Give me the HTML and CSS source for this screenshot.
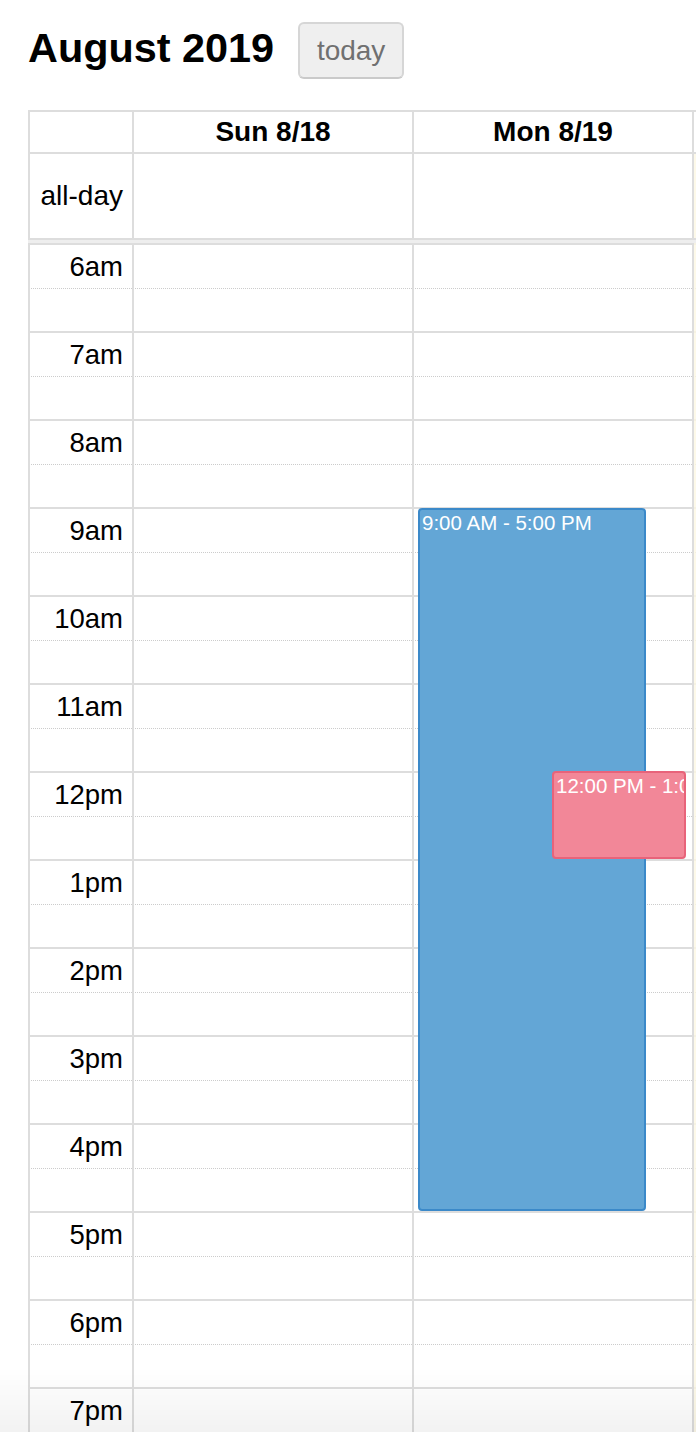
FILE: index.html
```html
<!DOCTYPE html>
<html lang="en">

<head>
  <meta charset="UTF-8">
  <meta name="viewport" content="width=device-width, initial-scale=1.0">
  <title>Calendar</title>
  <link rel="stylesheet" href="styles.css">
</head>

<body>
  <div class="toolbar">
    <h2 class="title">August 2019</h2>
    <button type="button" class="btn" disabled>today</button>
  </div>

  <div class="calendar">
    <!-- day headers -->
    <div class="row head">
      <div class="cell axis"></div>
      <div class="cell day">Sun 8/18</div>
      <div class="cell day">Mon 8/19</div>
      <div class="cell day">Tue 8/20</div>
    </div>
    <div class="row allday">
      <div class="cell axis">all-day</div>
      <div class="cell"></div>
      <div class="cell"></div>
      <div class="cell today"></div>
    </div>
    <div class="divider"></div>

    <div class="timegrid">
      <!-- slats: one solid line per hour, dotted per half hour -->
      <div class="slats">
        <div class="slot hour"><span class="label">6am</span></div>
        <div class="slot"></div>
        <div class="slot hour"><span class="label">7am</span></div>
        <div class="slot"></div>
        <div class="slot hour"><span class="label">8am</span></div>
        <div class="slot"></div>
        <div class="slot hour"><span class="label">9am</span></div>
        <div class="slot"></div>
        <div class="slot hour"><span class="label">10am</span></div>
        <div class="slot"></div>
        <div class="slot hour"><span class="label">11am</span></div>
        <div class="slot"></div>
        <div class="slot hour"><span class="label">12pm</span></div>
        <div class="slot"></div>
        <div class="slot hour"><span class="label">1pm</span></div>
        <div class="slot"></div>
        <div class="slot hour"><span class="label">2pm</span></div>
        <div class="slot"></div>
        <div class="slot hour"><span class="label">3pm</span></div>
        <div class="slot"></div>
        <div class="slot hour"><span class="label">4pm</span></div>
        <div class="slot"></div>
        <div class="slot hour"><span class="label">5pm</span></div>
        <div class="slot"></div>
        <div class="slot hour"><span class="label">6pm</span></div>
        <div class="slot"></div>
        <div class="slot hour"><span class="label">7pm</span></div>
        <div class="slot"></div>
        <div class="slot hour"><span class="label">8pm</span></div>
        <div class="slot"></div>
      </div>

      <!-- day columns sit over the slats, events live inside them -->
      <div class="cols">
        <div class="col"></div>
        <div class="col"></div>
        <div class="col">
          <!-- top/height: 88px per hour from 6am -->
          <div class="event blue" style="top: 265px; height: 703px; left: 4px; width: 228px;">9:00 AM - 5:00 PM</div>
          <div class="event pink" style="top: 528px; height: 88px; left: 138px; width: 134px;">12:00 PM - 1:00 PM</div>
        </div>
        <div class="col today"></div>
      </div>
    </div>
  </div>

  <div class="fade"></div>
</body>

</html>
```

FILE: styles.css
```css
html,
body {
  margin: 0;
  overflow: hidden;
}

body {
  font-family: "Liberation Sans", Arial, Helvetica, sans-serif;
  color: #000;
  background: #fff;
}

.toolbar {
  display: flex;
  align-items: center;
  gap: 24px;
  margin: 22px 0 0 28px;
  height: 57px;
}

.title {
  margin: 0 0 4px;
  font-size: 41.4px;
  font-weight: bold;
  line-height: 1;
}

.btn {
  width: 106px;
  height: 57px;
  padding: 0;
  font-family: inherit;
  font-size: 28px;
  color: #707070;
  background-color: #efefef;
  border: 2px solid #d6d6d6;
  border-bottom-color: #cacaca;
  border-radius: 6px;
}

.calendar {
  margin: 31px 0 0 28px;
  width: 944px;
}

.row {
  display: grid;
  grid-template-columns: 104px 280px 280px 280px;
}

.cell {
  box-sizing: border-box;
  border-top: 2px solid #ddd;
  border-left: 2px solid #ddd;
  display: flex;
  align-items: center;
  font-size: 28px;
}

.head .cell {
  height: 42px;
}

.head .day {
  justify-content: center;
  font-weight: bold;
}

.allday .cell {
  height: 86px;
}

.cell.axis {
  justify-content: flex-end;
  padding-right: 9px;
}

.today {
  background-color: rgba(252, 248, 227, 0.8);
}

/* 分隔条 */
.divider {
  height: 3px;
  background-color: #eee;
  border-top: 2px solid #ddd;
}

.timegrid {
  position: relative;
}

.slot {
  box-sizing: border-box;
  height: 43px;
  border-top: 1px dotted #ccc;
}

.slot.hour {
  height: 45px;
  border-top: 2px solid #ddd;
  display: flex;
  align-items: center;
}

.label {
  width: 104px;
  box-sizing: border-box;
  padding-right: 9px;
  text-align: right;
  font-size: 27.5px;
}

.cols {
  position: absolute;
  top: 0;
  left: 0;
  bottom: 0;
  display: grid;
  grid-template-columns: 104px 280px 280px 280px;
}

.col {
  position: relative;
  border-left: 2px solid #ddd;
}

.event {
  position: absolute;
  box-sizing: border-box;
  padding: 1px 2px;
  border: 2px solid;
  border-radius: 4px;
  color: #fff;
  font-size: 20.5px;
  line-height: 1.2;
  white-space: nowrap;
  overflow: hidden;
}

.event.blue {
  background-color: #63a6d6;
  border-color: #3b89c9;
}

.event.pink {
  background-color: #f28798;
  border-color: #e8637a;
  z-index: 2;
}

.fade {
  position: fixed;
  left: 0;
  right: 0;
  bottom: 0;
  height: 64px;
  background: linear-gradient(rgba(0, 0, 0, 0), rgba(0, 0, 0, 0.05));
  pointer-events: none;
}
```
